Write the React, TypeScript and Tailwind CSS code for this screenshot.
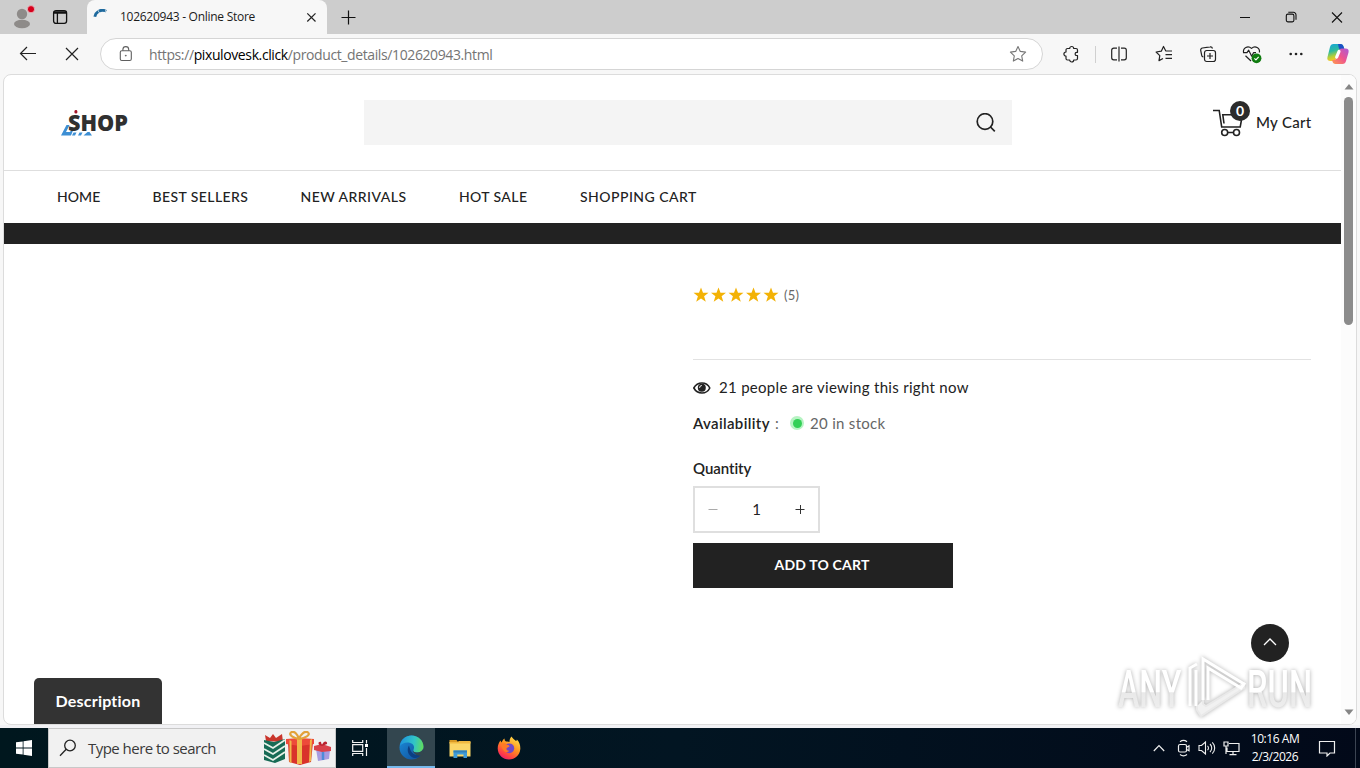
import React from "react";

const navItems = [
  { label: "HOME", className: "w-[95.5px] tracking-[0.05px]" },
  { label: "BEST SELLERS", className: "w-[148px] tracking-[0.42px]" },
  { label: "NEW ARRIVALS", className: "w-[158.5px] tracking-[0.45px]" },
  { label: "HOT SALE", className: "w-[121px] tracking-[0.4px]" },
  { label: "SHOPPING CART", className: "tracking-[0.48px]" },
];

const TabStrip = () => (
  <div className="flex h-[34px] shrink-0 items-stretch bg-[#cdcdcd]">
    <div className="flex w-[87px] items-center rounded-br-lg pl-3">
      <svg width="24" height="26" viewBox="0 0 24 26">
        <circle cx="10" cy="10" r="5.2" fill="#8e8b89" />
        <ellipse cx="10" cy="20" rx="8" ry="4.2" fill="#8e8b89" />
        <circle cx="19" cy="5.2" r="3.6" fill="#d6001c" stroke="#e8c8cc" strokeWidth="0.8" />
      </svg>
      <svg width="16" height="16" viewBox="0 0 16 16" className="ml-4" fill="none" stroke="#111" strokeWidth="1.3">
        <rect x="1.6" y="1.6" width="13" height="12.8" rx="2.4" />
        <path d="M1.6 4.2h13M1.6 3h13M5.4 4v10.4" />
      </svg>
    </div>
    <div className="flex w-[240px] items-center rounded-t-lg bg-[#f7f7f7]">
      <svg width="16" height="16" viewBox="0 0 16 16" className="ml-[6px]">
        <path d="M1.800 7.800A7.800 7.800 0 0 1 13.200 2.200" fill="none" stroke="#1f6a9e" strokeWidth="2.800" strokeDasharray="6.500 0.600" />
      </svg>
      <span className="ml-[11px] w-[184px] whitespace-nowrap text-[12px] tracking-[-0.27px] text-[#1b1b1b]">
        102620943 - Online Store
      </span>
      <svg width="11" height="11" viewBox="0 0 11 11" className="ml-[2px]" stroke="#222" strokeWidth="1.2">
        <path d="M1.3 1.3l8.2 8.2M9.5 1.3L1.3 9.5" />
      </svg>
    </div>
    <div className="flex flex-1 items-center">
      <svg width="16" height="16" viewBox="0 0 16 16" className="mb-px ml-[13px]" stroke="#111" strokeWidth="1.2">
        <path d="M8.500 1.500v14M1.500 8.500h14" />
      </svg>
    </div>
    <div className="flex items-center pr-[17px]">
      <svg width="12" height="12" viewBox="0 0 12 12" className="mr-[34px]" stroke="#111">
        <path d="M1 6.500h10" />
      </svg>
      <svg width="12" height="12" viewBox="0 0 12 12" className="mr-[34px]" fill="none" stroke="#111" strokeWidth="1.1">
        <rect x="1.3" y="3.1" width="7.6" height="7.8" rx="1.6" />
        <path d="M3.3 1.3h5a2.6 2.6 0 0 1 2.7 2.7v4.7" />
      </svg>
      <svg width="12" height="12" viewBox="0 0 12 12" stroke="#111" strokeWidth="1.1">
        <path d="M1 1.500l10 10M11 1.500l-10 10" />
      </svg>
    </div>
  </div>
);

const Copilot = () => (
  <svg width="24" height="24" viewBox="0 0 24 24">
    <defs>
      <linearGradient id="copA" x1="0" y1="0" x2="0.3" y2="1">
        <stop offset="0" stopColor="#15a4dc" />
        <stop offset="0.45" stopColor="#2dbba0" />
        <stop offset="0.75" stopColor="#b6cf38" />
        <stop offset="1" stopColor="#ffc629" />
      </linearGradient>
      <linearGradient id="copB" x1="1" y1="0" x2="0" y2="1">
        <stop offset="0" stopColor="#a95bd9" />
        <stop offset="0.5" stopColor="#ef558e" />
        <stop offset="1" stopColor="#ff9a4d" />
      </linearGradient>
    </defs>
    <path d="M7.500 2h7c1.800 0 2.500 1 3 2.500l1 3h-3.200c-2 0-3 1-3.600 3l-1.800 6c-.6 1.800-1.300 2.500-3 2.500H4.500C2 19 .8 17.500 1.500 15L4 5c.5-2 1.600-3 3.500-3z" fill="url(#copA)" />
    <path d="M12 2h2.500c1.800 0 2.500 1 3 2.500l1 3H14c-1.500-1-1.500-3.500-2-5.500z" fill="#1b51c5" />
    <path d="M16.500 22h-7c-1.800 0-2.500-1-3-2.500L6 18h1.500c2 0 3-1 3.600-3l1.800-6c.6-1.800 1.300-2.500 3-2.500h3.600c2.500 0 3.700 1.500 3 4L20 19c-.5 2-1.600 3-3.500 3z" fill="url(#copB)" />
    <path d="M13 9.500l-2.300 5.500" stroke="#fff" strokeWidth="3.200" strokeLinecap="round" />
  </svg>
);

const Toolbar = () => (
  <div className="flex h-10 shrink-0 items-center bg-[#f7f7f7]">
    <svg width="18" height="16" viewBox="0 0 18 16" className="ml-[19px]" fill="none" stroke="#222" strokeWidth="1.2">
      <path d="M17 7.500H1.500M8 1L1.500 7.500 8 14" />
    </svg>
    <svg width="14" height="14" viewBox="0 0 14 14" className="ml-7" stroke="#222" strokeWidth="1.2">
      <path d="M1 1l12 12M13 1L1 13" />
    </svg>
    <div className="ml-[21px] flex h-8 w-[943px] items-center rounded-full border border-[#d5d5d5] bg-white">
      <svg width="14" height="17" viewBox="0 0 14 17" className="ml-[18px]" fill="none" stroke="#5f5f5f" strokeWidth="1.1">
        <rect x="1.300" y="4.800" width="11" height="9.700" rx="1.500" />
        <path d="M3.900 4.800V3.500a2.900 2.900 0 0 1 5.800 0v1.300" />
        <circle cx="6.800" cy="9.600" r="0.700" fill="#444" strokeWidth="0.300" />
      </svg>
      <span className="ml-4 flex-1 whitespace-nowrap text-[14px] tracking-[-0.39px] text-[#747474]">
        https://<span className="text-black">pixulovesk.click</span>/product_details/102620943.html
      </span>
      <svg width="18" height="18" viewBox="0 0 18 18" className="mr-[15px]" fill="none" stroke="#777" strokeWidth="1.1" strokeLinejoin="round">
        <path d="M9 1.500l2.300 4.900 5.300.7-3.900 3.700 1 5.300L9 13.500l-4.700 2.600 1-5.300-3.900-3.700 5.300-.7z" />
      </svg>
    </div>
    <svg width="18" height="18" viewBox="0 0 18 18" className="ml-5" fill="none" stroke="#222" strokeWidth="1.200" strokeLinejoin="round">
      <path d="M4.500 3.500h2.200a2 2 0 0 1 4 0h2.300a1.500 1.500 0 0 1 1.500 1.500v2.300h-.8a1.600 1.600 0 0 0 0 3.200h.8V13.500a1.500 1.500 0 0 1-1.500 1.500h-2.300a2 2 0 0 1-4 0H4.500A1.500 1.500 0 0 1 3 13.500v-2.300a2.100 2.100 0 0 1 0-4.200V5a1.500 1.500 0 0 1 1.500-1.500z" />
    </svg>
    <div className="ml-[14px] h-[17px] w-px bg-[#d0d0d0]" />
    <svg width="18" height="16" viewBox="0 0 18 16" className="ml-[14px]" fill="none" stroke="#222" strokeWidth="1.200">
      <path d="M7 2.200H3.700a2 2 0 0 0-2 2v7.600a2 2 0 0 0 2 2H7M11 2.200h3.300a2 2 0 0 1 2 2v7.600a2 2 0 0 1-2 2H11M9 .5v15" />
    </svg>
    <svg width="18" height="18" viewBox="0 0 18 18" className="ml-[27px]" fill="none" stroke="#222" strokeWidth="1.200" strokeLinejoin="round">
      <path d="M10.800 6L8.500 1.500 6.300 6.200l-5.200.8 3.700 3.600-.8 5L8 13.500M10.500 6H17M10.500 9.700H17M10.500 13.300H17" />
    </svg>
    <svg width="18" height="18" viewBox="0 0 18 18" className="ml-[26px]" fill="none" stroke="#222" strokeWidth="1.200">
      <rect x="5.500" y="5.500" width="11" height="11" rx="2.200" />
      <path d="M11 8v6M8 11h6M13.500 3.500c-.4-1.300-1.300-1.800-2.400-1.600L3.500 3C2.200 3.200 1.500 4.100 1.700 5.300l1 5c.2 1 .8 1.500 1.700 1.700" />
    </svg>
    <svg width="20" height="20" viewBox="0 0 20 20" className="ml-[25px]" fill="none" stroke="#222" strokeWidth="1.200" strokeLinejoin="round">
      <path d="M1.500 8.500C.8 4 5.800.8 9.500 4.400 13.200.8 18.200 4 17.400 8.500M3.500 11.800L9 17M1 8.700h4l1.700-2.500 3 6 1.800-3.500h2.500" />
      <circle cx="14.500" cy="14.300" r="4.900" fill="#107c10" stroke="none" />
      <path d="M12.400 14.400l1.500 1.500 2.800-3" stroke="#fff" />
    </svg>
    <svg width="14" height="4" viewBox="0 0 14 4" className="ml-[27px]" fill="#222">
      <circle cx="1.700" cy="2" r="1.300" />
      <circle cx="7" cy="2" r="1.300" />
      <circle cx="12.300" cy="2" r="1.300" />
    </svg>
    <div className="ml-[23px]">
      <Copilot />
    </div>
  </div>
);

const ShopLogo = () => (
  <svg width="70" height="30" viewBox="0 0 70 30">
    <path d="M6.500 17h3l-3.500 7h4l1-1.500h2L11 27.500H1z" fill="#3d8fd4" />
    <path d="M13.500 24.500h3L15 27.500h-3zM19.500 24.500h3L21 27.500h-3zM27.500 24h2l2.500 3.500h-8.500z" fill="#3d8fd4" />
    <rect x="14.500" y="2" width="2.800" height="3.600" rx="1.300" fill="#a3162b" />
    <text
      x="8"
      y="23"
      textLength="60"
      lengthAdjust="spacingAndGlyphs"
      fontFamily="Open Sans, sans-serif"
      fontWeight="800"
      fontSize="22.500"
      fill="#303030"
    >
      SHOP
    </text>
  </svg>
);

const ShopHeader = () => (
  <header className="flex h-24 shrink-0 items-center border-b border-[#dedede]">
    <div className="ml-14 w-[304px]">
      <ShopLogo />
    </div>
    <div className="flex h-[45px] w-[648px] items-center justify-end bg-[#f4f4f4]">
      <svg width="20" height="20" viewBox="0 0 20 20" className="mr-4" fill="none" stroke="#222" strokeWidth="1.700">
        <circle cx="9" cy="8.500" r="7.800" />
        <path d="M14.500 14l4.300 4.300" />
      </svg>
    </div>
    <div className="relative ml-[200px] flex items-center">
      <svg width="32" height="30" viewBox="0 0 32 30" fill="none" stroke="#222" strokeWidth="1.600">
        <path d="M1 2.500h6.200l2.500 16.500h18.500l2-11M12 15.500L10.800 6.800H20" />
        <circle cx="12.700" cy="24.500" r="3" />
        <circle cx="24.500" cy="24.500" r="3" />
        <path d="M16 24.500h5" />
      </svg>
      <span className="absolute left-[18px] top-[-7px] flex h-5 w-5 items-center justify-center rounded-full bg-[#2b2b2b] font-['Lato'] text-[14px] font-bold text-white">
        0
      </span>
      <span className="ml-[12px] whitespace-nowrap text-[15px] font-medium tracking-[0.3px]">My Cart</span>
    </div>
  </header>
);

const Stars = () => (
  <svg width="88" height="16" viewBox="0 0 88 16" fill="#f3b206">
    {[0, 1, 2, 3, 4].map((i) => (
      <path
        key={i}
        transform={`translate(${i * 17.5} 0)`}
        d="M8 .5l2 5.300h5.500L11.100 9.200l1.700 5.500L8 11.500l-4.800 3.200 1.700-5.500L.5 5.800H6z"
      />
    ))}
  </svg>
);

const ProductInfo = () => (
  <section className="ml-[689px] flex w-[618px] flex-col font-['Lato'] text-[#222]">
    <div className="mt-[43px] flex h-4 items-center">
      <Stars />
      <span className="ml-[3px] mt-[2px] text-[13px] tracking-[0.3px] text-[#666]">(5)</span>
    </div>
    <div className="mt-14 h-px bg-[#e2e2e2]" />
    <div className="mt-[18px] flex h-5 items-center">
      <svg width="18" height="14" viewBox="0 0 18 14">
        <path d="M.8 7C4.500.3 13.500.3 16.800 7 13.500 13.700 4.500 13.700.8 7z" fill="none" stroke="#222" strokeWidth="1.600" />
        <circle cx="8.800" cy="6.700" r="4" fill="#222" />
        <path d="M6.600 6.800A2.300 2.300 0 0 1 8.800 4.500" fill="none" stroke="#fff" strokeWidth="1" />
      </svg>
      <span className="mb-px ml-[8px] whitespace-nowrap text-[15px] tracking-[0.3px]">21 people are viewing this right now</span>
    </div>
    <div className="mt-[15px] flex h-5 items-center whitespace-nowrap text-[15px]">
      <span className="w-[82px] font-semibold tracking-[0.35px]">Availability</span>
      <span className="w-[15px] text-[#666]">:</span>
      <span className="flex h-[14px] w-[14px] items-center justify-center rounded-full bg-[#b7f3c3]">
        <span className="h-[9px] w-[9px] rounded-full bg-[#33d057]" />
      </span>
      <span className="ml-[6px] tracking-[0.3px] text-[#666]">20 in stock</span>
    </div>
    <label className="mt-[25px] h-5 text-[15px] font-semibold leading-5 tracking-[-0.05px]">Quantity</label>
    <div className="mt-[8px] flex h-[47px] w-[127px] items-center justify-between border-2 border-[#dfdfdf] px-[12px]">
      <svg width="12" height="12" viewBox="0 0 12 12" stroke="#aaa">
        <path d="M1.500 5.500h9" />
      </svg>
      <span className="text-[15px]">1</span>
      <svg width="12" height="12" viewBox="0 0 12 12" stroke="#333">
        <path d="M1.500 5.500h9M6.500 1v9" />
      </svg>
    </div>
    <button className="mt-[10px] h-[45px] w-[260px] bg-[#222] pb-[2px] pr-[2px] text-[14px] font-bold tracking-[0.2px] text-white">
      ADD TO CART
    </button>
  </section>
);

const Scrollbar = () => (
  <div className="flex w-[15px] shrink-0 flex-col items-center bg-[#fcfcfc]">
    <svg width="10" height="6" viewBox="0 0 10 6" className="mt-[9px]" fill="#858585">
      <path d="M5 0l4.500 5.500h-9z" />
    </svg>
    <div className="mt-[7px] h-[228px] w-[9px] rounded-full bg-[#8b8b8b]" />
    <div className="flex-1" />
    <svg width="10" height="6" viewBox="0 0 10 6" className="mb-[9px]" fill="#858585">
      <path d="M5 6L.5.5h9z" />
    </svg>
  </div>
);

const Watermark = () => (
  <svg
    width="210"
    height="72"
    viewBox="0 0 210 72"
    className="absolute bottom-[2px] left-[1108px] drop-shadow-[0_0_2px_rgba(0,0,0,0.32)]"
    fontFamily="Roboto, sans-serif"
    fontSize="51"
    fontWeight="500"
  >
    <defs>
      <linearGradient id="wm" x1="0" y1="0" x2="0" y2="1">
        <stop offset="0.55" stopColor="#ffffff" />
        <stop offset="0.56" stopColor="#e9e9e9" />
        <stop offset="1" stopColor="#f1f1f1" />
      </linearGradient>
    </defs>
    <text transform="translate(6 57) scale(0.630 1)" fill="url(#wm)">
      ANY
    </text>
    <text transform="translate(135 57) scale(0.640 1)" fill="url(#wm)">
      RUN
    </text>
    <path d="M85 56V60l4 6 43-28v-5L94 56l-3-2V50" fill="#f1f1f1" stroke="#e9e9e9" strokeWidth="2" />
    <path d="M78 56V18l7-4M84 56V20M91 50V9l41 25-3 4-33-20v32" fill="none" stroke="#fff" strokeWidth="3" />
  </svg>
);

const ShopPage = () => (
  <div className="relative ml-[3px] flex h-[651px] w-[1354px] shrink-0 overflow-hidden rounded-lg border border-[#dcdcdc] bg-white">
    <div className="flex w-[1337px] shrink-0 flex-col font-['Lato'] text-[#222]">
      <ShopHeader />
      <nav className="flex h-[52px] shrink-0 items-center whitespace-nowrap pb-[2px] pl-[53px] text-[14px] font-medium">
        {navItems.map((item) => (
          <a key={item.label} className={item.className}>
            {item.label}
          </a>
        ))}
      </nav>
      <div className="h-[21px] shrink-0 bg-[#222]" />
      <ProductInfo />
      <div className="ml-[30px] mt-auto flex h-[46px] w-[128px] shrink-0 items-center justify-center rounded-t-[5px] bg-[#333] pb-px text-[16px] font-bold tracking-[0.2px] text-white">
        Description
      </div>
    </div>
    <Scrollbar />
    <button className="absolute bottom-[62px] left-[1247px] flex h-[38px] w-[38px] items-center justify-center rounded-full bg-[#222]">
      <svg width="14" height="8" viewBox="0 0 14 8" className="mb-[3px]" fill="none" stroke="#fff" strokeWidth="1.300">
        <path d="M1 7l6-6 6 6" />
      </svg>
    </button>
    <Watermark />
  </div>
);

const Gifts = () => (
  <svg width="70" height="34" viewBox="0 0 70 34">
    {/* green striped gift */}
    <path d="M3 10L2 4l5 3 3-4 3 4 6-4 1 8z" fill="#c9352b" />
    <path d="M1 9l10 2 11-3v20l-10 4-11-3z" fill="#176b55" />
    <path d="M1 12l9 5 12-8M1 18l9 5 12-8M1 24l9 5 12-8" fill="none" stroke="#e6f1e8" strokeWidth="1.800" />
    {/* red gift with a gold ribbon */}
    <path d="M25 11h25l-2 20-11 3-11-3z" fill="#d9322b" />
    <path d="M23 8l14-1 14 1v5l-14 2-14-2z" fill="#ed4a3a" />
    <path d="M34 8h5v25h-5z" fill="#f0b84a" />
    <path d="M36 8C31 7 25 4 28 1.500S35 4 36 8c1-4 6-9 9-6.500S42 7 36 8z" fill="none" stroke="#e2a23a" strokeWidth="2.200" />
    <path d="M26.500 9l2 1v22l-2-1zM47 9l2-1-1 22-2 1z" fill="#f0b84a" />
    {/* small violet gift */}
    <path d="M53 18l14 1-1 9-11 2z" fill="#a79be0" />
    <path d="M51 15l8-2 9 3v4l-9 1-8-2z" fill="#d9414a" />
    <path d="M59 15c-5-1-4-5-1-4l1 4c1-6 6-5 5-2z" fill="#b8222e" />
    <path d="M60 21v8" stroke="#4d8bd8" strokeWidth="2.500" />
  </svg>
);

const EdgeIcon = () => (
  <svg width="25" height="25" viewBox="0 0 25 25">
    <defs>
      <linearGradient id="edgeTop" x1="0" y1="0.400" x2="1" y2="0.500">
        <stop offset="0" stopColor="#1f93dd" />
        <stop offset="0.600" stopColor="#31c5c7" />
        <stop offset="1" stopColor="#61dc5c" />
      </linearGradient>
      <linearGradient id="edgeLow" x1="0" y1="0" x2="1" y2="1">
        <stop offset="0" stopColor="#1b8edb" />
        <stop offset="1" stopColor="#104a96" />
      </linearGradient>
    </defs>
    <circle cx="12.500" cy="12.500" r="12" fill="url(#edgeLow)" />
    <path d="M1 11C2 4 7 .5 12.500.5 19.500.5 24.500 6 24.500 11.500c0 4-3 6-6.500 6-3 0-4.500-1.200-3.500-2.800C16 12 14.500 8.500 10.500 7.800 6.500 7 3 8.500 1 11z" fill="url(#edgeTop)" />
    <path d="M10 10.500c-3 4.500-.5 11 5 12.500 3 .6 6-1.200 7.500-3.800-2.500 1.300-6 1.200-8.200-.5-2.800-2-3.500-5-4.300-8.200z" fill="#0c3f82" />
    <path d="M14.600 14.600c-1 1.700.6 2.900 3.400 2.900 2.700 0 5.500-1.300 6.300-4l1 4-2.500 3c-4 1-8.300-1.500-8.800-4.500z" fill="#33464f" />
  </svg>
);

const FolderIcon = () => (
  <svg width="22" height="19" viewBox="0 0 22 19">
    <path d="M.5 1h7l1.500 2H.5z" fill="#d99a25" />
    <path d="M.5 3h21v14.500H.5z" fill="#fbd668" />
    <path d="M.5 3h8l1.500-1h11.500v2.500H.5z" fill="#f1b941" />
    <path d="M4.500 19v-7.500h13.500V19h-3.500v-3.500H8.300V19z" fill="#3f9bd8" />
    <path d="M4.500 11.500h13.500v2H4.500z" fill="#327fb8" />
  </svg>
);

const FirefoxIcon = () => (
  <svg width="24" height="24" viewBox="0 0 24 24" className="ml-[2px]">
    <defs>
      <linearGradient id="fox" x1="0.800" y1="0" x2="0.200" y2="1">
        <stop offset="0" stopColor="#ffe14a" />
        <stop offset="0.450" stopColor="#ff8f1f" />
        <stop offset="0.800" stopColor="#ff3b47" />
        <stop offset="1" stopColor="#e01979" />
      </linearGradient>
    </defs>
    <path d="M14.500.5c1 2 3 3 4.500 4.500.8-.3.8-1 .8-1.500C22.500 6 23.500 9.500 23.300 13c-.4 6-5.300 10.500-11.300 10.500S.8 19 .7 12.500C.7 9 2 6.500 3.500 4.500l.8 2C5.500 5 6 3.500 7.500 2.500c0 1.500.5 2.500 1.500 3 2 0 3 .2 3.500.5 0-2 .5-4 2-5.500z" fill="url(#fox)" />
    <circle cx="12.300" cy="12.300" r="4.900" fill="#7048c8" />
    <path d="M4 8c3-1.500 5-.5 6 .8 1.500.2 2.500.7 2.500 1.500 0 1-2.500 1-3 2-.4 1.300.8 2.700 3 2.500-2 2-5 1.500-6-.5C5 12 4 10 4 8z" fill="#ff7a26" />
  </svg>
);

const Taskbar = () => (
  <div className="flex h-10 shrink-0 items-center bg-gradient-to-r from-[#00171e] via-[#021522] to-[#020919] text-white">
    <div className="flex w-12 justify-center">
      <svg width="16" height="16" viewBox="0 0 16 16" fill="#fff">
        <path d="M0 2.300l6.700-.9v6.200H0zM7.500 1.200L16 0v7.600H7.500zM0 8.400h6.700v6.200L0 13.700zM7.500 8.400H16V16l-8.500-1.200z" />
      </svg>
    </div>
    <div className="flex h-10 w-72 items-center border border-[#c8c8c8] bg-[#f1f1f1]">
      <svg width="18" height="18" viewBox="0 0 18 18" className="ml-[10px]" fill="none" stroke="#222" strokeWidth="1.300">
        <circle cx="11" cy="6.500" r="5.300" />
        <path d="M7.200 10.300L1 16.700" />
      </svg>
      <span className="ml-[11px] w-[175px] whitespace-nowrap text-[15px] tracking-[-0.530px] text-[#3a3a3a]">Type here to search</span>
      <Gifts />
    </div>
    <div className="flex w-[51px] justify-center pr-[3px]">
      <svg width="18" height="18" viewBox="0 0 18 18" fill="none" stroke="#f2f2f2" strokeWidth="1.200">
        <path d="M1.700 1v2.500h10V1M1.700 17v-2.500h10V17M1.700 5.700h10v6.600h-10zM15.500 1v3.500M15.500 9v8" />
        <path d="M14 5h3v3h-3z" fill="#fff" stroke="none" />
      </svg>
    </div>
    <div className="flex h-10 w-12 items-center justify-center border-b-2 border-[#76b9ed] bg-[#33464f]">
      <EdgeIcon />
    </div>
    <div className="flex w-[49px] justify-center">
      <FolderIcon />
    </div>
    <div className="flex w-12 justify-center">
      <FirefoxIcon />
    </div>
    <div className="flex-1" />
    <svg width="12" height="8" viewBox="0 0 12 8" className="mr-3" fill="none" stroke="#eee" strokeWidth="1.200">
      <path d="M.8 7L6 1.500 11.200 7" />
    </svg>
    <svg width="14" height="18" viewBox="0 0 14 18" className="mr-[7px]" fill="none" stroke="#eee" strokeWidth="1.200">
      <rect x="1.500" y="5.500" width="8" height="7.500" rx="1.500" />
      <path d="M9.500 8.200l2.500-1.400v5l-2.500-1.400M3 2.700c2-1.500 5-1.500 7 0M3 15.500c2 1.500 5 1.500 7 0" />
    </svg>
    <svg width="18" height="16" viewBox="0 0 18 16" className="mr-[7px]" fill="none" stroke="#eee" strokeWidth="1.100">
      <path d="M1 5.500h2.500L7.500 2v12l-4-3.500H1zM9.500 5.800a3 3 0 0 1 0 4.400M12 4a5.500 5.500 0 0 1 0 8M14.300 2.300a8 8 0 0 1 0 11.400" />
    </svg>
    <svg width="17" height="15" viewBox="0 0 17 15" className="mr-[10px]" fill="none" stroke="#eee" strokeWidth="1.200">
      <path d="M6 2.500h10v8H4V6.500M10 10.500v3M6.500 13.700h7M1 1h4v4H1zM3 5v8" />
    </svg>
    <div className="flex w-[50px] flex-col items-center whitespace-nowrap text-[12px] leading-[18px]">
      <span className="tracking-[-0.450px]">10:16 AM</span>
      <span className="tracking-[-0.450px]">2/3/2026</span>
    </div>
    <svg width="18" height="17" viewBox="0 0 18 17" className="ml-[18px] mr-[19px]" fill="none" stroke="#eee" strokeWidth="1.200">
      <path d="M1.500 1.500h15v11.500h-4.500l-3 3v-3H1.500z" />
    </svg>
    <div className="mr-1 h-10 w-px bg-[#3c4452]" />
  </div>
);

const App = () => {
  return (
    <div className="flex h-[768px] w-[1360px] flex-col overflow-hidden bg-[#f7f7f7] font-['Open_Sans',sans-serif]">
      <TabStrip />
      <Toolbar />
      <ShopPage />
      <div className="flex-1 bg-[#f1f1f4]" />
      <Taskbar />
    </div>
  );
};

export default App;
